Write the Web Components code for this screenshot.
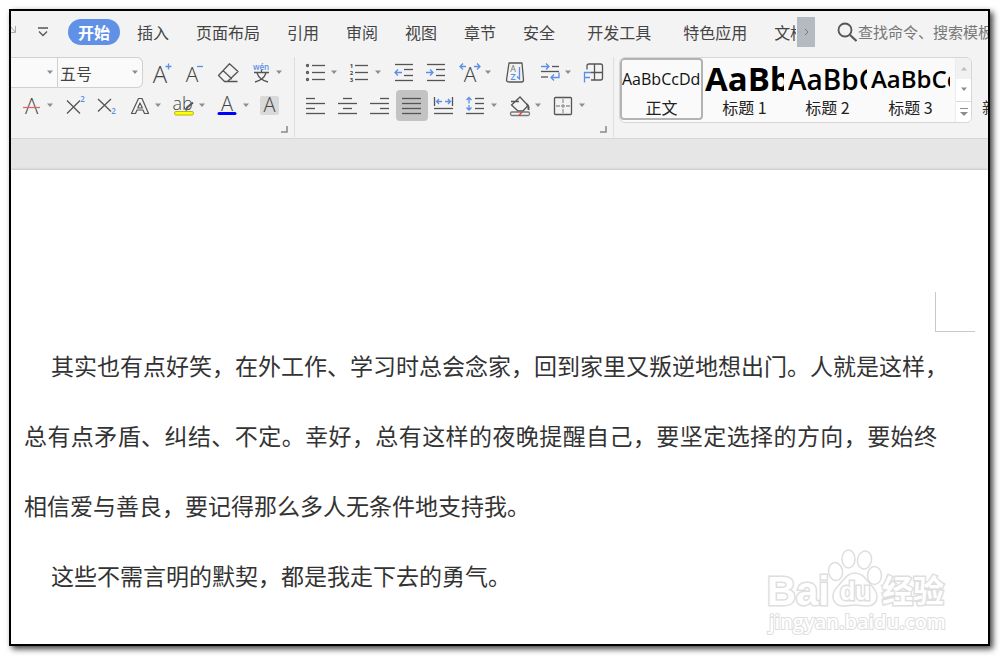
<!DOCTYPE html>
<html lang="zh-CN">
<head>
<meta charset="utf-8">
<meta name="viewport" content="width=device-width, initial-scale=1">
<title>文字文稿</title>
<style>
html { height: 100%; }
body { margin: 0; min-height: 100%; display: flex; flex-direction: column; background: #fff;
  font-family: "Noto Sans CJK SC", "Noto Sans", sans-serif; color: #404040; overflow: hidden; }
</style>
</head>
<body>
<writer-window>
  <tab-strip slot="tabs">
    <tab-group><ribbon-tab selected>开始</ribbon-tab><ribbon-tab>插入</ribbon-tab><ribbon-tab>页面布局</ribbon-tab><ribbon-tab>引用</ribbon-tab><ribbon-tab>审阅</ribbon-tab><ribbon-tab>视图</ribbon-tab><ribbon-tab>章节</ribbon-tab><ribbon-tab>安全</ribbon-tab></tab-group>
    <tab-group><ribbon-tab>开发工具</ribbon-tab></tab-group>
    <tab-group><ribbon-tab>特色应用</ribbon-tab><ribbon-tab>文档</ribbon-tab></tab-group>
  </tab-strip>
  <ribbon-group slot="ribbon" class="font">
    <tool-row slot="top" gap="1">
      <combo-pair></combo-pair>
      <tool-button icon="grow" label="增大字号"></tool-button>
      <tool-button icon="shrink" label="减小字号"></tool-button>
      <tool-button icon="eraser" label="清除格式"></tool-button>
      <tool-button icon="pinyin" label="拼音指南" caret></tool-button>
    </tool-row>
    <tool-row slot="bottom" inset>
      <tool-button icon="strike" label="删除线" caret></tool-button>
      <tool-button icon="sup" label="上标"></tool-button>
      <tool-button icon="sub" label="下标"></tool-button>
      <tool-button icon="effect" label="文字效果" caret></tool-button>
      <tool-button icon="highlight" label="突出显示" caret></tool-button>
      <tool-button icon="color" label="字体颜色" caret></tool-button>
      <tool-button icon="shade" label="字符底纹"></tool-button>
    </tool-row>
  </ribbon-group>
  <ribbon-group slot="ribbon">
    <tool-row slot="top" inset gap="2">
      <tool-row><tool-button icon="bullets" label="项目符号" caret></tool-button><tool-button icon="numbers" label="编号" caret></tool-button><tool-button icon="outdent" label="减少缩进量"></tool-button><tool-button icon="indent" label="增加缩进量"></tool-button></tool-row>
      <tool-button icon="scale" label="中文版式" caret></tool-button>
      <tool-button icon="sort" label="排序"></tool-button>
      <tool-row><tool-button icon="marks" label="显示编辑标记" caret></tool-button><tool-button icon="tabstop" label="制表位"></tool-button></tool-row>
    </tool-row>
    <tool-row slot="bottom" inset>
      <tool-button icon="left" label="左对齐"></tool-button>
      <tool-button icon="center" label="居中对齐"></tool-button>
      <tool-button icon="right" label="右对齐"></tool-button>
      <tool-button icon="justify" label="两端对齐" pressed></tool-button>
      <tool-button icon="distribute" label="分散对齐"></tool-button>
      <tool-button icon="spacing" label="行距" caret></tool-button>
      <tool-button icon="fill" label="底纹颜色" caret></tool-button>
      <tool-button icon="border" label="边框" caret></tool-button>
    </tool-row>
  </ribbon-group>
  <style-gallery slot="ribbon">
    <style-card selected sample="AaBbCcDd">正文</style-card>
    <style-card level="1" sample="AaBb">标题 1</style-card>
    <style-card level="2" sample="AaBbC">标题 2</style-card>
    <style-card level="3" sample="AaBbCc">标题 3</style-card>
  </style-gallery>
  <doc-page slot="page">
    <doc-paragraph><doc-line full>其实也有点好笑，在外工作、学习时总会念家，回到家里又叛逆地想出门。人就是这样，</doc-line><doc-line full>总有点矛盾、纠结、不定。幸好，总有这样的夜晚提醒自己，要坚定选择的方向，要始终</doc-line><doc-line>相信爱与善良，要记得那么多人无条件地支持我。</doc-line></doc-paragraph>
    <doc-paragraph><doc-line>这些不需言明的默契，都是我走下去的勇气。</doc-line></doc-paragraph>
    <page-watermark slot="overlay"></page-watermark>
  </doc-page>
</writer-window>

<script>
const RESET = `button,select,input{font:inherit;color:inherit;border:0;margin:0;padding:0;background:none;border-radius:0;outline:0}svg{display:block}`;

function define(name, render) {
  customElements.define(name, class extends HTMLElement {
    constructor() { super(); this.attachShadow({ mode: 'open' }); }
    connectedCallback() {
      const t = document.createElement('template');
      t.innerHTML = render(this);
      this.shadowRoot.replaceChildren(t.content.cloneNode(true));
    }
  });
}

const CARET = `<svg width="8" height="5" viewBox="0 0 8 5" aria-hidden="true"><path d="M1 0.5h6L4 4z" fill="#8d8d8d"/></svg>`;
const B = '#5b8fe6';
const lines = (...l) => l.map(([x1, x2, y]) => `<path d="M${x1} ${y}H${x2}"/>`).join('');
const glyph = (t, x, y, size, extra = '') => `<text x="${x}" y="${y}" font-size="${size}" text-anchor="middle" font-family="Open Sans, Noto Sans, sans-serif" font-weight="300" fill="#444" stroke="none" ${extra}>${t}</text>`;

const ICONS = {
  grow: glyph('A', 8, 20, 24) + `<path d="M13.500 3.5h6M16.500 .5v6" stroke="${B}"/>`,
  shrink: glyph('A', 7, 19, 21) + `<path d="M12 3.5h6" stroke="${B}"/>`,
  eraser: `<path d="M11.500.8 20 8.500 9.500 18.500H6.500L.500 12.500z M5 7.500l9 8.500M9.500 18.500H19.500" stroke-linejoin="round"/>`,
  pinyin: glyph('wén', 10, 7, 8, `style="fill:${B};font-weight:600"`) + `<path d="M3 9.500h15M10.500 7v2.500M6 10c1.500 4.500 5 7.500 11 9M15 10c-1.500 4.500-5 7.500-11 9"/>`,
  strike: glyph('A', 9.500, 18, 22) + `<path d="M1 11.500h17" stroke="#e06666"/>`,
  sup: `<path d="M1 4.500 14 17.500M14 4.500 1 17.500"/>` + glyph('2', 16.500, 6, 8, `style="fill:${B};font-weight:600"`),
  sub: `<path d="M0 3 13 15.500M13 3 0 15.500"/>` + glyph('2', 15.500, 18, 8, `style="fill:${B};font-weight:600"`),
  effect: `<path d="M8.500 2.500h3.500L18.500 17.500h-4l-1.500-3.500H7L5.500 17.500h-4zM10 7l-2.200 5h4.600z" stroke-linejoin="round" stroke-width="1.200"/>`,
  highlight: glyph('ab', 8.500, 14, 18) + `<path d="M12 14.500l1-3 6-5" stroke-width="2"/><rect x=".500" y="15.500" width="19" height="3.500" rx="1.500" fill="#ffff00" stroke="#b5b51c" stroke-width="1"/>`,
  color: glyph('A', 9, 15, 20) + `<path d="M1 17.500h16" stroke="#0000ff" stroke-width="3" stroke-linecap="round"/>`,
  shade: `<rect x="-2" y="0" width="19" height="19" rx="2" fill="#d9d9d9" stroke="none"/>` + glyph('A', 7.500, 16, 20),
  bullets: `<circle cx="1.500" cy="2.500" r="1"/><circle cx="1.500" cy="9.500" r="1"/><circle cx="1.500" cy="16.500" r="1"/>` + lines([6, 19, 2.5], [6, 19, 9.5], [6, 19, 16.5]),
  numbers: glyph('1', 1.500, 5, 6, 'style="font-weight:700"') + glyph('2', 1.500, 12, 6, 'style="font-weight:700"') + glyph('3', 1.500, 19, 6, 'style="font-weight:700"') + lines([5, 18, 2.5], [5, 18, 9.5], [5, 18, 16.5]),
  outdent: lines([1, 19, 1.5], [10, 19, 6.5], [10, 19, 12.5], [1, 19, 17.5]) + `<path d="M8 9.500H1M4 6.500l-3 3 3 3" stroke="${B}"/>`,
  indent: lines([1, 19, 1.5], [10, 19, 6.5], [10, 19, 12.5], [1, 19, 17.5]) + `<path d="M0 9.500H7M4 6.500l3 3-3 3" stroke="${B}"/>`,
  scale: glyph('A', 10, 19, 21) + `<path d="M6 3.500H0M3 .500l-3 3 3 3M14 3.500h6M17 .500l3 3-3 3" stroke="${B}"/>`,
  sort: `<path d="M3 0h13l1.500 17q0 2-2 2h-12q-3 0-3-2z" stroke-linejoin="round"/>` + glyph('A', 7, 9, 9, 'style="font-weight:400;fill:#777"') + glyph('Z', 7, 17, 9, `style="font-weight:600;fill:${B}"`) + `<path d="M13.500 4v12l-2.500-2.500" stroke="${B}"/>`,
  marks: `<path d="M1 3.500h8M6 .500l3 3-3 3M19 9.500v5h-8M14 11.500l-3 3 3 3" stroke="${B}"/>` + lines([12, 19, 3.5], [1, 19, 8.5], [1, 8, 14]),
  tabstop: `<path d="M3 6.500V3q0-2 2-2h11.500q2 0 2 2v12q0 2-2 2H7M10.500 1v16M7 9.500h11.500"/><path d="M.500 19.500V9.500H7M.500 14.500H6" stroke="${B}"/>`,
  left: lines([0, 9, 2.5], [0, 19, 7.5], [0, 9, 12.5], [0, 19, 17.5]),
  center: lines([5, 14, 2.5], [0, 19, 7.5], [5, 14, 12.5], [0, 19, 17.5]),
  right: lines([10, 19, 2.5], [0, 19, 7.5], [10, 19, 12.5], [0, 19, 17.5]),
  justify: lines([0, 19, 2.5], [0, 19, 7.5], [0, 19, 12.5], [0, 19, 17.5]),
  distribute: `<path d="M.500 1v9M18.500 1v9"/><path d="M8 5.500H2.500M5 3L2.500 5.500 5 8M11 5.500h5.500M14 3l2.500 2.500L14 8" stroke="${B}"/>` + lines([0, 19, 12.5], [0, 19, 17.5]),
  spacing: lines([9, 18, 2.5], [9, 18, 7.5], [9, 18, 12.5], [0, 18, 17.5]) + `<path d="M3 7.500V1.500M.500 4 3 1.500 5.500 4M3 9v5M.500 11.500 3 14l2.500-2.500" stroke="${B}"/>`,
  fill: `<path d="M10 1 1.500 9 8 15h5l5-5.500zM1 5.500h8"/><path d="M17 8q2 2.500 1.500 6" stroke-width="2"/><rect x=".500" y="16" width="19" height="3.500" rx="1.500" stroke="#777"/><path d="M9 19.500l3-3.500" stroke="#e33"/>`,
  border: `<rect x=".500" y="1.500" width="17" height="17" rx="1"/><path d="M9 3v14M2 10h14" stroke-dasharray="4 1" stroke="#999"/>`
};

define('tool-button', el => `<style>${RESET}
:host{display:block;flex:none}
button{display:flex;align-items:center;gap:4px;height:31px;padding:0 6px;border-radius:4px}
button[aria-pressed=true]{background:#c3c3c3}
.icon{overflow:visible;fill:none;stroke:#555;stroke-width:1.3}
</style><button type="button" aria-label="${el.getAttribute('label')}" aria-pressed="${el.hasAttribute('pressed')}">
<svg class="icon" width="20" height="20" viewBox="0 0 20 20">${ICONS[el.getAttribute('icon')]}</svg>${el.hasAttribute('caret') ? CARET : ''}</button>`);

define('tool-row', el => `<style>:host{display:flex;align-items:center;gap:${el.getAttribute('gap') || 0}px;padding-left:${el.hasAttribute('inset') ? 5 : 0}px}</style><slot></slot>`);

define('combo-pair', () => `<style>${RESET}
:host{display:flex;flex:none;margin-right:2px;height:31px;box-sizing:border-box;border:1px solid #d0d0d0;border-left:0;border-radius:0 6px 6px 0;background:#fafafa;color:#444;font-size:16px}
label{display:grid;grid-template-columns:1fr 16px;align-items:center}
label+label{border-left:1px solid #d0d0d0}
.name{width:46px}.size{width:84px}
select{grid-area:1/1/2/3;width:100%;height:100%;appearance:none;padding-left:2px}
svg{grid-area:1/2;pointer-events:none;margin-left:5px}
</style><label class="name"><select aria-label="字体"><option></option></select>${CARET}</label>
<label class="size"><select aria-label="字号"><option>五号</option><option>四号</option></select>${CARET}</label>`);

define('ribbon-group', () => `<style>${RESET}
:host{display:flex;flex-direction:column;flex:none;width:318px;height:80px;border-right:1px solid #dedede}
:host(.font){width:283px}
.bottom{margin-top:2px}
button{align-self:flex-end;margin:5px 6px 0 0}
</style><slot name="top"></slot><div class="bottom"><slot name="bottom"></slot></div>
<button type="button" aria-label="更多设置"><svg width="7" height="7" viewBox="0 0 7 7"><path d="M6 0v6H0" fill="none" stroke="#888" stroke-width="1.500"/></svg></button>`);

define('ribbon-tab', el => `<style>${RESET}
:host{display:block;flex:none}
button{height:26px;padding:0 10px;border-radius:13px;font-size:16px;line-height:26px;color:#444;white-space:nowrap}
button[aria-selected=true]{background:#6091e6;color:#fff;font-weight:700}
</style><button type="button" role="tab" aria-selected="${el.hasAttribute('selected')}"><slot></slot></button>`);

define('tab-group', () => `<style>:host{display:flex;gap:7px;flex:none}</style><slot></slot>`);
define('tab-strip', () => `<style>:host{display:flex;gap:12px;flex:1;min-width:0;overflow:hidden}</style><slot></slot>`);

define('style-card', el => `<style>${RESET}
:host{display:block;flex:none;width:83px}
button{display:flex;flex-direction:column;align-items:center;width:100%;height:62px;border:2px solid transparent;border-radius:4px;color:#222;box-sizing:border-box;overflow:hidden}
:host([selected]) button{border-color:#b3b3b3}
.sample{height:38px;line-height:38px;width:79px;overflow:hidden;white-space:nowrap;text-align:left;font-family:"Open Sans","Noto Sans",sans-serif;font-size:16px;color:#111}
:host([level]) .sample{font-weight:700;color:#000}
:host([level="1"]) .sample{font-size:33px}
:host([level="2"]) .sample{font-size:28px;font-weight:600}
:host([level="3"]) .sample{font-size:24px;font-weight:600}
.name{font-size:16px;line-height:18px}
</style><button type="button"><span class="sample">${el.getAttribute('sample')}</span><span class="name"><slot></slot></span></button>`);

define('style-gallery', () => `<style>${RESET}
:host{display:flex;flex:none;align-items:flex-start}
.box{display:flex;margin-left:5px;height:66px;box-sizing:border-box;border:1px solid #d6d6d6;border-radius:6px;background:#fafafa;overflow:hidden}
.scroll{display:grid;grid-template-rows:1fr 1fr 1fr;width:15px;margin-left:3px;border-left:1px solid #ececec}
.scroll button{display:grid;place-items:center}
.scroll button+button{background:#fff}
.scroll button:last-child{border-top:1px solid #d5dbe2}
.up{background:#f1f1f1}.up svg{transform:rotate(180deg);opacity:.5}
.new{margin:40px 0 0 10px;font-size:16px;line-height:20px;white-space:nowrap;color:#333}
</style><div class="box"><slot></slot><div class="scroll">
<button class="up" type="button" aria-label="上一行">${CARET}</button><button type="button" aria-label="下一行">${CARET}</button>
<button type="button" aria-label="展开"><svg width="8" height="8" viewBox="0 0 8 8"><path d="M0 .500h8" stroke="#8d8d8d"/><path d="M0 4h8L4 8z" fill="#8d8d8d"/></svg></button></div></div>
<button class="new" type="button">新样式</button>`);

define('doc-page', () => `<style>
:host{display:block;position:relative;flex:1;background:#fff;padding:122px 51px 32px 13px;box-shadow:0 -1px 2px #c8c8c8}
.corner{width:39px;height:39px;margin:0 -38px -2px auto;border:solid #c9c9c9;border-width:0 0 1px 1px}
</style><div class="corner"></div><slot></slot><slot name="overlay"></slot>`);

define('doc-paragraph', () => `<style>
:host{display:block}
p{margin:0;font-size:23px;line-height:70px;color:#333}
::slotted(doc-line:first-child){text-indent:27px}
</style><p><slot></slot></p>`);

define('doc-line', () => `<style>
:host{display:block;white-space:nowrap}
:host([full]){text-align:justify;text-align-last:justify}
</style><slot></slot>`);

define('page-watermark', () => `<style>
:host{position:absolute;right:40px;bottom:8px}
svg{display:block;fill:#fff;stroke:#dedede;stroke-width:2;overflow:visible}
text{paint-order:stroke;stroke-width:3}
</style><svg width="184" height="90" viewBox="0 0 184 90" role="img" aria-label="Baidu 经验">
<text x="3" y="59" font-family="Liberation Sans" font-weight="700" font-size="40">Bai</text>
<g stroke-width="1.500"><ellipse cx="71.500" cy="25.500" rx="7" ry="9" transform="rotate(-10 71.500 25.500)"/><ellipse cx="84.500" cy="13" rx="6.500" ry="9"/><ellipse cx="100.500" cy="14" rx="7" ry="9" transform="rotate(12 100.500 14)"/><ellipse cx="110.500" cy="29.500" rx="7" ry="9"/>
<path d="M91 27c8 0 11 7 17 13 8 9 6 19-4 20-5 0-9-1-13-1s-8 1-13 1c-9-1-13-11-4-20C80 34 83 27 91 27z"/></g>
<text x="76" y="54" font-family="Liberation Sans" font-weight="700" font-size="25">du</text>
<text x="118" y="56" font-family="Noto Sans CJK SC" font-weight="700" font-size="31">经验</text>
<text x="5" y="83" font-family="Open Sans" font-weight="600" font-size="20" style="stroke-width:2">jingyan.baidu.com</text>
</svg>`);

define('search-box', () => `<style>${RESET}
:host{display:flex;align-items:center;gap:1px;flex:none;width:151px;overflow:hidden}
svg,input{flex:none}
input{width:160px;height:26px;font-size:15px}
input::placeholder{color:#777;opacity:1}
</style><svg width="20" height="20" viewBox="0 0 20 20" fill="none" stroke="#555"><circle cx="8" cy="8" r="6.500" stroke-width="1.800"/><path d="M13 13l6.500 6" stroke-width="2.200"/></svg>
<input type="search" aria-label="搜索" placeholder="查找命令、搜索模板">`);

define('writer-window', () => `<style>${RESET}
:host{display:flex;flex-direction:column;flex:1;margin:9px 10px 10px 9px;border:2px solid #000;background:#e6e6e6;box-shadow:3px 3px 6px rgba(0,0,0,.75);overflow:hidden}
header{background:#f3f3f3;border-bottom:1px solid #d6d6d6}
.top{display:flex;align-items:center;height:41px}
.cut{margin:0 21px 5px 0}
.quick{margin-right:20px}
.more{width:18px;height:30px;margin:0 22px 0 1px;background:#b5b9c2;display:grid;place-items:center}
.ribbon{display:flex;padding-top:5px;height:81px;overflow:hidden}
main{display:flex;flex-direction:column;flex:1;margin-top:31px}
</style><header><div class="top">
<svg class="cut" width="6" height="9" viewBox="0 0 6 9" fill="none" stroke="#aaa"><path d="M0 2l4 5M0 7.500h4.500V1"/></svg>
<button class="quick" type="button" aria-label="自定义快速访问工具栏"><svg width="10" height="10" viewBox="0 0 10 10" fill="none" stroke="#555" stroke-width="1.300"><path d="M0 1h10M1 4.500l4 4 4-4"/></svg></button>
<slot name="tabs"></slot>
<button class="more" type="button" aria-label="更多选项卡"><svg width="5" height="8" viewBox="0 0 5 8" fill="none" stroke="#777"><path d="M1 1l3 3-3 3"/></svg></button>
<search-box></search-box></div>
<div class="ribbon"><slot name="ribbon"></slot></div></header>
<main><slot name="page"></slot></main>`);
</script>
</body>
</html>
